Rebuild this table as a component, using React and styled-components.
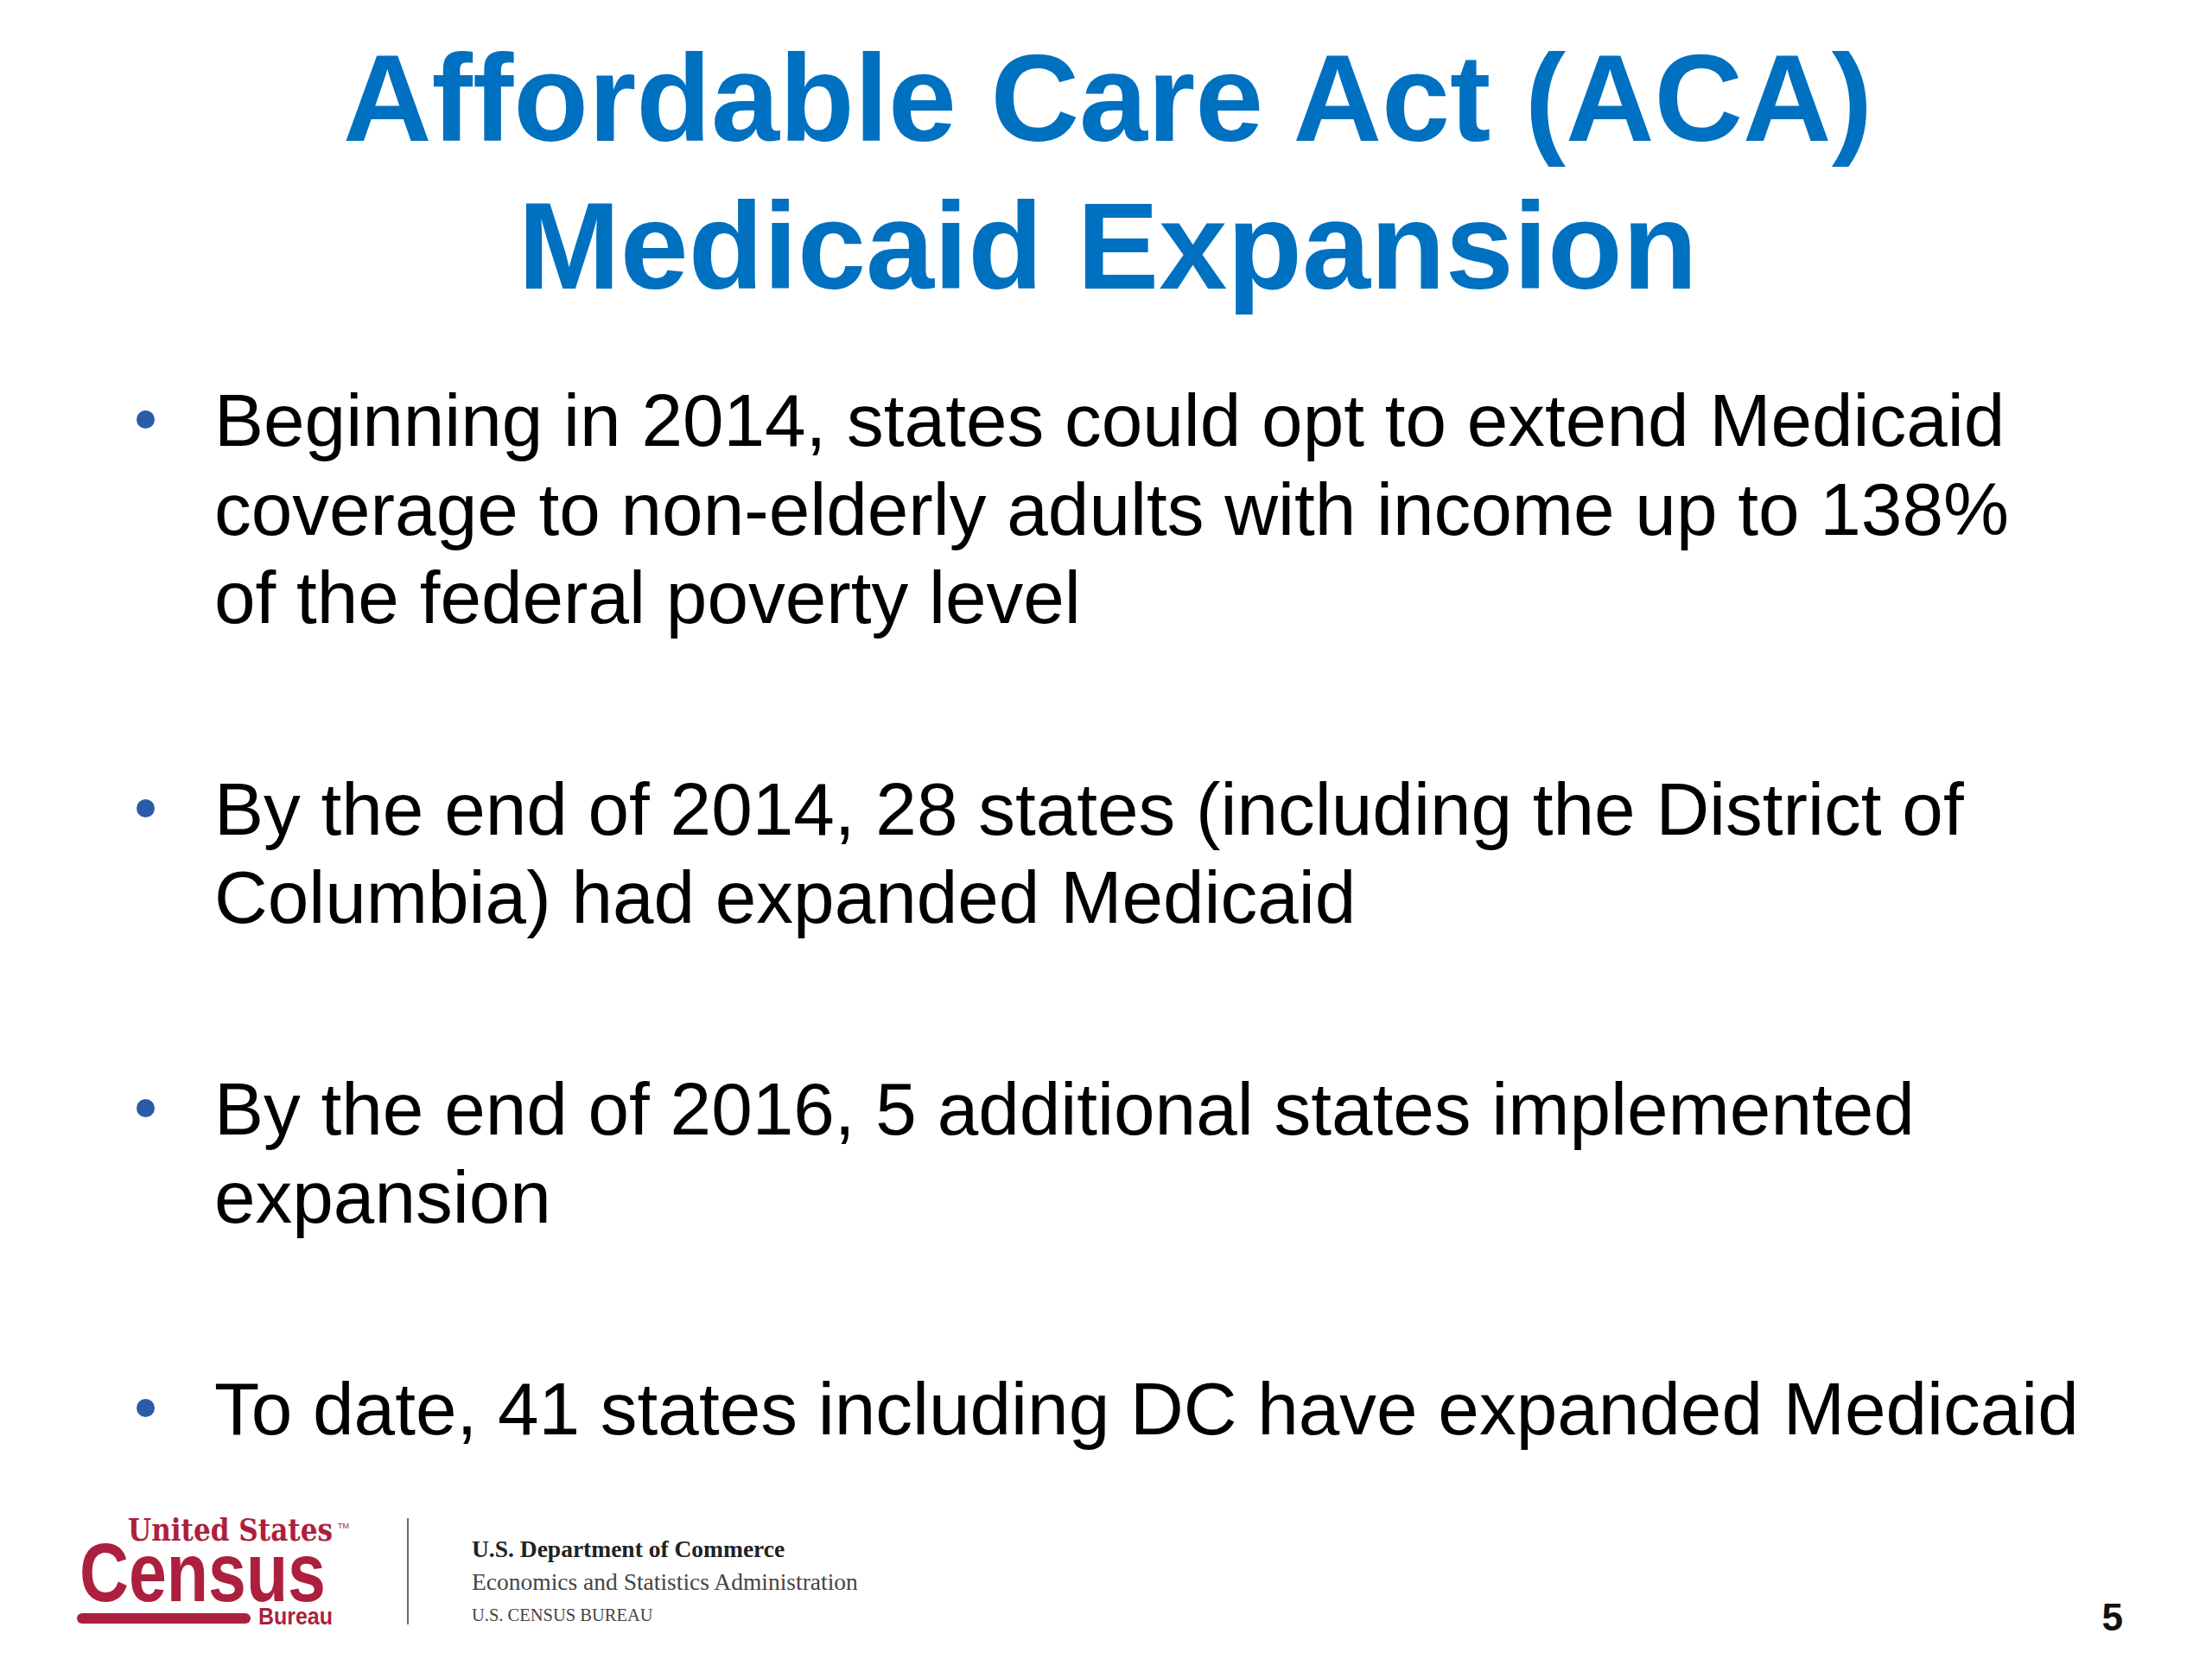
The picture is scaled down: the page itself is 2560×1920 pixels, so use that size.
import React from 'react'
import styled, { createGlobalStyle } from 'styled-components'

const GlobalStyle = createGlobalStyle`
    html, body {
        margin: 0;
        padding: 0;
        background: #ffffff;
    }
`

const points = [
    [
        'Beginning in 2014, states could opt to extend Medicaid',
        'coverage to non-elderly adults with income up to 138%',
        'of the federal poverty level',
    ],
    [
        'By the end of 2014, 28 states (including the District of',
        'Columbia) had expanded Medicaid',
    ],
    [
        'By the end of 2016, 5 additional states implemented',
        'expansion',
    ],
    ['To date, 41 states including DC have expanded Medicaid'],
]

const censusRed = '#ad1f3e'

function CensusLogo() {
    return (
        <LogoSvg width="320" height="138" viewBox="0 0 320 138">
            <text
                x="60"
                y="33"
                fontFamily="'DejaVu Serif Condensed', 'DejaVu Serif', serif"
                fontWeight="bold"
                fontSize="35"
                textLength="237"
                lengthAdjust="spacingAndGlyphs"
                fill={censusRed}
            >
                United States
            </text>
            <text x="303" y="19" fontFamily="'Liberation Sans', sans-serif" fontSize="9" fill={censusRed}>
                TM
            </text>
            <text
                x="4"
                y="103"
                fontFamily="'Liberation Sans', Arial, sans-serif"
                fontWeight="bold"
                fontSize="97"
                textLength="285"
                lengthAdjust="spacingAndGlyphs"
                fill={censusRed}
            >
                Census
            </text>
            <rect x="1" y="117" width="201" height="12" rx="6" fill={censusRed} />
            <text
                x="211"
                y="130"
                fontFamily="'Liberation Sans', Arial, sans-serif"
                fontWeight="bold"
                fontSize="27"
                textLength="86"
                lengthAdjust="spacingAndGlyphs"
                fill={censusRed}
            >
                Bureau
            </text>
        </LogoSvg>
    )
}

export default function App() {
    return (
        <>
            <GlobalStyle />
            <Slide>
                <Title>
                    Affordable Care Act (ACA)
                    <br />
                    Medicaid Expansion
                </Title>
                <BulletList>
                    {points.map((lines, i) => (
                        <BulletItem key={i}>
                            <BulletMark>
                                <Dot />
                            </BulletMark>
                            <BulletText>
                                {lines.map((line, j) => (
                                    <Line key={j}>{line}</Line>
                                ))}
                            </BulletText>
                        </BulletItem>
                    ))}
                </BulletList>
                <Footer>
                    <CensusLogo />
                    <Divider />
                    <Agency>
                        <AgencyLine bold>U.S. Department of Commerce</AgencyLine>
                        <AgencyLine>Economics and Statistics Administration</AgencyLine>
                        <AgencyLine small>U.S. CENSUS BUREAU</AgencyLine>
                    </Agency>
                    <PageNumber>5</PageNumber>
                </Footer>
            </Slide>
        </>
    )
}

const Slide = styled.div`
    box-sizing: border-box;
    width: 2560px;
    height: 1920px;
    display: flex;
    flex-direction: column;
    padding-top: 28px;
    background: #ffffff;
    font-family: "Liberation Sans", Arial, sans-serif;
`

const Title = styled.h1`
    margin: 0;
    padding-left: 4px;
    text-align: center;
    font-size: 142px;
    line-height: 171px;
    font-weight: bold;
    color: #0070c0;
`

const BulletList = styled.ul`
    list-style: none;
    margin: 66px 0 0 0;
    padding: 0 0 0 158px;
    display: flex;
    flex-direction: column;
    gap: 142px;
`

const BulletItem = styled.li`
    display: flex;
    align-items: flex-start;
`

const BulletMark = styled.span`
    flex: 0 0 90px;
    padding-top: 39px;
`

const Dot = styled.span`
    display: block;
    width: 21px;
    height: 21px;
    border-radius: 50%;
    background: #2a5ca8;
`

const BulletText = styled.div`
    font-size: 85.5px;
    line-height: 102.5px;
    color: #000000;
`

const Line = styled.div`
    white-space: nowrap;
`

const Footer = styled.footer`
    margin-top: auto;
    display: flex;
    align-items: flex-end;
    padding: 0 103px 26px 88px;
`

const LogoSvg = styled.svg`
    display: block;
    margin-bottom: 6px;
`

const Divider = styled.div`
    width: 2px;
    height: 123px;
    background: #6a6a6a;
    margin: 0 0 14px 63px;
`

const Agency = styled.div`
    display: flex;
    flex-direction: column;
    margin: 0 0 6px 73px;
    font-family: "Liberation Serif", "Times New Roman", serif;
`

const AgencyLine = styled.div`
    font-size: ${(props) => (props.small ? '20.5px' : '27.5px')};
    line-height: 38px;
    font-weight: ${(props) => (props.bold ? 'bold' : 'normal')};
    color: ${(props) => (props.bold ? '#222222' : '#444444')};
    white-space: nowrap;
`

const PageNumber = styled.div`
    margin-left: auto;
    font-size: 44px;
    line-height: 44px;
    font-weight: bold;
    color: #111111;
`
